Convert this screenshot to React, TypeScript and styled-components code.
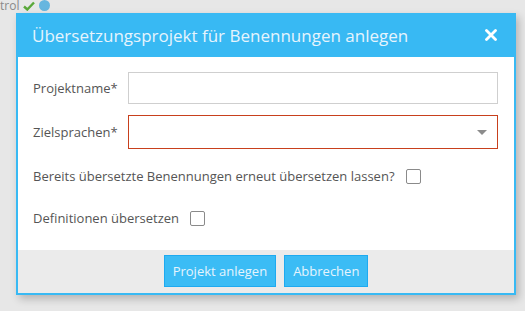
import React from "react";
import styled, { createGlobalStyle } from "styled-components";

const Global = createGlobalStyle`
  html, body { margin: 0; padding: 0; }
  body {
    background: #e7e7e7;
    font-family: "Open Sans", "Liberation Sans", sans-serif;
    width: 525px;
    height: 311px;
    overflow: hidden;
  }
`;

const Page = styled.div`
  display: flex;
  flex-direction: column;
  height: 311px;
`;

const TopStrip = styled.div`
  height: 13px;
  display: flex;
  align-items: flex-end;
  gap: 4px;
  overflow: hidden;
`;

const StripText = styled.span`
  font-size: 12px;
  line-height: 13px;
  color: #8a8a8a;
  margin-bottom: 1px;
`;

const Dot = styled.span`
  width: 11px;
  height: 11px;
  border-radius: 50%;
  background: #66b6df;
  margin-bottom: 2px;
`;

const Dialog = styled.div`
  margin-left: 16px;
  width: 496px;
  border: 2px solid #38b9f3;
  border-top: 0;
  background: #fff;
  box-shadow: 3px 4px 8px rgba(0, 0, 0, 0.22);
  display: flex;
  flex-direction: column;
`;

const Header = styled.div`
  height: 44px;
  background: #38b9f3;
  display: flex;
  align-items: center;
  justify-content: space-between;
  padding: 0 16px 0 14px;
`;

const Title = styled.h1`
  margin: 0;
  font-size: 17px;
  font-weight: 400;
  color: #e6f4fd;
`;

const Close = styled.button`
  border: 0;
  background: none;
  padding: 0;
  width: 14px;
  height: 14px;
  display: flex;
  align-items: center;
  justify-content: center;
  cursor: pointer;
`;

const Body = styled.div`
  padding: 15px 16px 24px 15px;
  display: flex;
  flex-direction: column;
`;

const FieldRow = styled.div<{ $mt?: number }>`
  display: flex;
  align-items: center;
  margin-top: ${(p) => p.$mt ?? 0}px;
`;

const Label = styled.label`
  width: 95px;
  font-size: 13px;
  color: #555;
`;

const Input = styled.input`
  flex: 1;
  height: 32px;
  box-sizing: border-box;
  border: 1px solid #cfcfcf;
  outline: none;
  padding: 0 8px;
  font-family: inherit;
  font-size: 13px;
`;

const Select = styled.div`
  flex: 1;
  height: 34px;
  box-sizing: border-box;
  border: 1px solid #c8401d;
  display: flex;
  align-items: center;
  justify-content: flex-end;
  padding-right: 10px;
`;

const Arrow = styled.span`
  width: 0;
  height: 0;
  border-left: 5px solid transparent;
  border-right: 5px solid transparent;
  border-top: 5px solid #8c8c8c;
  margin-top: 1px;
`;

const CheckRow = styled.div<{ $mt: number }>`
  display: flex;
  align-items: center;
  gap: 11px;
  margin-top: ${(p) => p.$mt}px;
  height: 16px;
`;

const CheckText = styled.span`
  font-size: 13px;
  color: #555;
`;

const Box = styled.span`
  width: 13px;
  height: 13px;
  border: 1.5px solid #8a8a8a;
  border-radius: 2px;
  box-sizing: content-box;
  background: #fff;
`;

const Footer = styled.div`
  background: #ebebeb;
  height: 43px;
  display: flex;
  align-items: center;
  justify-content: center;
  gap: 8px;
`;

const Button = styled.button`
  height: 32px;
  box-sizing: border-box;
  border: 1px solid #1eaaf0;
  background: #3bbcf5;
  color: #e6f4fd;
  font-family: inherit;
  font-size: 13px;
  padding: 0 8px;
  margin-top: -1px;
  cursor: pointer;
`;

export default function App() {
  return (
    <>
      <Global />
      <Page>
        <TopStrip>
          <StripText>trol</StripText>
          <svg width="12" height="10" viewBox="0 0 12 10" style={{ marginBottom: 2 }}>
            <path d="M1 5.5 L4.3 8.5 L11 1.5" stroke="#5aa83a" strokeWidth="2.4" fill="none" />
          </svg>
          <Dot />
        </TopStrip>
        <Dialog>
          <Header>
            <Title>Übersetzungsprojekt für Benennungen anlegen</Title>
            <Close aria-label="Schließen">
              <svg width="12" height="12" viewBox="0 0 12 12">
                <path d="M1.5 1.5 L10.5 10.5 M10.5 1.5 L1.5 10.5" stroke="#fff" strokeWidth="2.8" strokeLinecap="round" />
              </svg>
            </Close>
          </Header>
          <Body>
            <FieldRow>
              <Label>Projektname*</Label>
              <Input />
            </FieldRow>
            <FieldRow $mt={11}>
              <Label>Zielsprachen*</Label>
              <Select>
                <Arrow />
              </Select>
            </FieldRow>
            <CheckRow $mt={19}>
              <CheckText>Bereits übersetzte Benennungen erneut übersetzen lassen?</CheckText>
              <Box />
            </CheckRow>
            <CheckRow $mt={26}>
              <CheckText>Definitionen übersetzen</CheckText>
              <Box />
            </CheckRow>
          </Body>
          <Footer>
            <Button>Projekt anlegen</Button>
            <Button>Abbrechen</Button>
          </Footer>
        </Dialog>
      </Page>
    </>
  );
}
